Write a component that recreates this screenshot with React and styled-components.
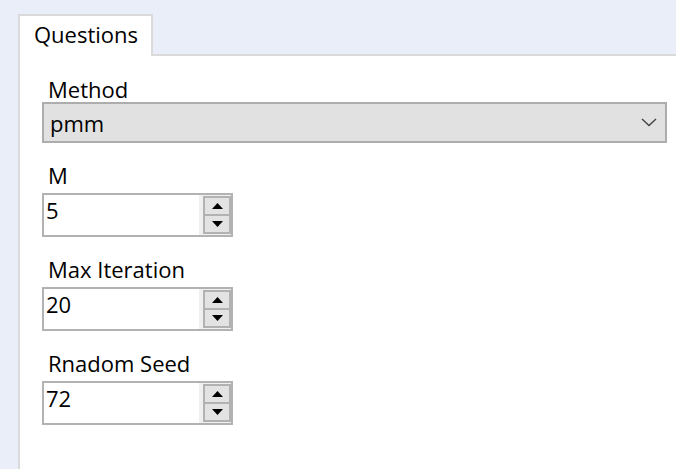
import React from "react";
import styled, { createGlobalStyle } from "styled-components";

const GlobalStyle = createGlobalStyle`
  html, body {
    margin: 0;
    padding: 0;
    background: #eaeef9;
  }
  body {
    font-family: "Open Sans", "Noto Sans", sans-serif;
    font-size: 22px;
    color: #000;
  }
`;

const Page = styled.div`
  min-height: 100vh;
  box-sizing: border-box;
  padding: 14px 0 0 18px;
  display: flex;
  flex-direction: column;
`;

const TabStrip = styled.div`
  display: flex;
  align-items: stretch;
`;

const Tab = styled.div`
  width: 135px;
  height: 42px;
  box-sizing: border-box;
  border: 2px solid #dadada;
  border-bottom: none;
  background: #fff;
  padding: 7px 0 0 14px;
  line-height: 22px;
`;

const TabFiller = styled.div`
  flex: 1;
  border-bottom: 2px solid #dadada;
`;

const Panel = styled.div`
  flex: 1;
  background: #fff;
  border-left: 2px solid #dadada;
  padding: 22px 9px 30px 22px;
  display: flex;
  flex-direction: column;
`;

const Field = styled.div`
  display: flex;
  flex-direction: column;
  margin-top: ${props => (props.first ? "0" : "21px")};
`;

const Label = styled.div`
  line-height: 22px;
  padding-left: 6px;
  margin-bottom: ${props => (props.tight ? "2px" : "7px")};
`;

const Select = styled.div`
  height: 41px;
  box-sizing: border-box;
  border: 2px solid #adadad;
  background: #e1e1e1;
  display: flex;
  align-items: center;
  justify-content: space-between;
  padding: 0 8px 0 6px;
  line-height: 22px;
`;

const Chevron = () => (
  <svg width="16" height="9" viewBox="0 0 16 9">
    <polyline
      points="1,1 8,7.5 15,1"
      fill="none"
      stroke="#444"
      strokeWidth="1.4"
    />
  </svg>
);

const Spin = styled.div`
  width: 191px;
  height: 44px;
  box-sizing: border-box;
  border: 2px solid #b2b2b2;
  background: #fff;
  display: flex;
`;

const SpinValue = styled.div`
  flex: 1;
  padding: 4px 0 0 2px;
  line-height: 22px;
`;

const SpinColumn = styled.div`
  width: 32px;
  background: #f0f0f0;
  padding: 1px 0 1px 4px;
  box-sizing: border-box;
  display: flex;
`;

const SpinStack = styled.div`
  flex: 1;
  border: 2px solid #b2b2b2;
  display: flex;
  flex-direction: column;
`;

const SpinButton = styled.div`
  height: 16px;
  background: #e3e3e3;
  display: flex;
  align-items: center;
  justify-content: center;
  border-top: ${props => (props.lower ? "2px solid #b2b2b2" : "none")};
`;

const Arrow = ({ down }) => (
  <svg width="11" height="6" viewBox="0 0 11 6">
    <polygon
      points={down ? "0,0 11,0 5.5,6" : "0,6 11,6 5.5,0"}
      fill="#000"
    />
  </svg>
);

const SpinBox = ({ value }) => (
  <Spin>
    <SpinValue>{value}</SpinValue>
    <SpinColumn>
      <SpinStack>
        <SpinButton>
          <Arrow />
        </SpinButton>
        <SpinButton lower>
          <Arrow down />
        </SpinButton>
      </SpinStack>
    </SpinColumn>
  </Spin>
);

const fields = [
  { label: "M", value: "5" },
  { label: "Max Iteration", value: "20" },
  { label: "Rnadom Seed", value: "72" }
];

export default function App() {
  return (
    <Page>
      <GlobalStyle />
      <TabStrip>
        <Tab>Questions</Tab>
        <TabFiller />
      </TabStrip>
      <Panel>
        <Field first>
          <Label tight>Method</Label>
          <Select>
            <span>pmm</span>
            <Chevron />
          </Select>
        </Field>
        {fields.map(f => (
          <Field key={f.label}>
            <Label>{f.label}</Label>
            <SpinBox value={f.value} />
          </Field>
        ))}
      </Panel>
    </Page>
  );
}
